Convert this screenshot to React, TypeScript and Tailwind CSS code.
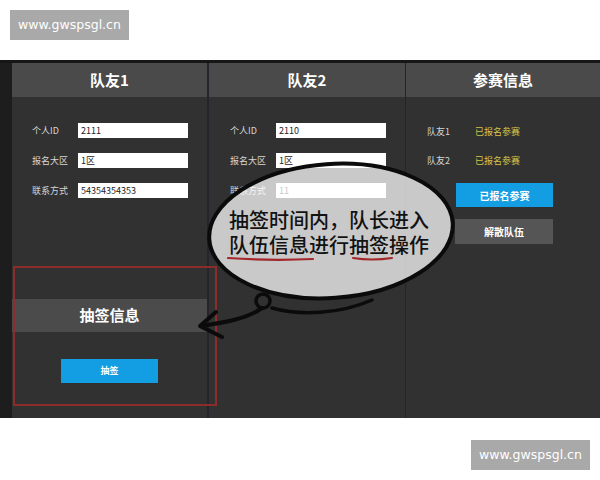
import React from "react";

function Field({ label, value }: { label: string; value: string }) {
  return (
    <div className="flex items-center h-[15px]">
      <div className="w-[46px] text-[9px] leading-none text-[#d6d6d6]">{label}</div>
      <div className="w-[110px] h-[15px] bg-white flex items-center pl-[3px] text-[9px] leading-none text-[#222]">{value}</div>
    </div>
  );
}

function Header({ title }: { title: string }) {
  return (
    <div className="h-[34px] bg-[#4a4a4a] flex items-center justify-center text-white text-[15px] font-bold">
      {title}
    </div>
  );
}

export default function App() {
  return (
    <div className="w-[600px] h-[480px] bg-white relative overflow-hidden font-['Noto_Sans_CJK_SC',sans-serif]">
      <div className="h-[60px] pt-[10px] pl-[10px]">
        <div className="w-[119px] h-[30px] bg-[#a9a9a9] text-white text-[12.5px] flex items-center justify-center font-['DejaVu_Sans',sans-serif]">
          www.gwspsgl.cn
        </div>
      </div>

      <div className="h-[358px] bg-[#313131] border-t-[3px] border-[#161616] flex">
        <div className="w-[12px] bg-[#1d1d1d]" />

        <div className="w-[195px] flex flex-col">
          <Header title="队友1" />
          <div className="pt-[26px] pl-[20px] flex flex-col gap-[15px]">
            <Field label="个人ID" value="2111" />
            <Field label="报名大区" value="1区" />
            <Field label="联系方式" value="54354354353" />
          </div>
          <div className="mt-[101px] h-[33px] bg-[#4b4b4b] flex items-center justify-center text-white text-[15px] font-bold">
            抽签信息
          </div>
          <div className="mt-[27px] flex justify-center">
            <div className="w-[97px] h-[24px] bg-[#139de2] text-white text-[9px] font-bold flex items-center justify-center">
              抽签
            </div>
          </div>
        </div>

        <div className="w-[2px] bg-[#24242a]" />

        <div className="w-[196px] flex flex-col">
          <Header title="队友2" />
          <div className="pt-[26px] pl-[21px] flex flex-col gap-[15px]">
            <Field label="个人ID" value="2110" />
            <Field label="报名大区" value="1区" />
            <Field label="联系方式" value="11" />
          </div>
        </div>

        <div className="w-[1px] bg-[#24242a]" />

        <div className="flex-1 flex flex-col">
          <Header title="参赛信息" />
          <div className="pt-[27px] pl-[21px] flex flex-col gap-[14px]">
            <div className="flex items-center h-[15px] text-[9px] leading-none">
              <div className="w-[48px] text-[#d6d6d6]">队友1</div>
              <div className="text-[#d4c646]">已报名参赛</div>
            </div>
            <div className="flex items-center h-[15px] text-[9px] leading-none">
              <div className="w-[48px] text-[#d6d6d6]">队友2</div>
              <div className="text-[#d4c646]">已报名参赛</div>
            </div>
          </div>
          <div className="mt-[15px] ml-[50px] w-[97px] h-[24px] bg-[#139de2] text-white text-[10px] font-bold flex items-center justify-center">
            已报名参赛
          </div>
          <div className="mt-[12px] ml-[49px] w-[98px] h-[25px] bg-[#555555] text-white text-[10px] font-bold flex items-center justify-center">
            解散队伍
          </div>
        </div>
      </div>

      <div className="flex justify-end pr-[10px] pt-[22px]">
        <div className="w-[119px] h-[30px] bg-[#a9a9a9] text-white text-[12.5px] flex items-center justify-center font-['DejaVu_Sans',sans-serif]">
          www.gwspsgl.cn
        </div>
      </div>

      <div className="absolute left-[13px] top-[266px] w-[204px] h-[140px] border-2 border-[#8e2b2b]" />

      <svg className="absolute left-0 top-0 pointer-events-none" width="600" height="480" viewBox="0 0 600 480">
        <ellipse cx="331" cy="231" rx="122" ry="67" transform="rotate(-4 331 231)" fill="rgba(255,255,255,0.74)" stroke="#0b0b0b" strokeWidth="4" />
        <path d="M 372 300 C 340 314, 300 316, 272 308" fill="none" stroke="#0b0b0b" strokeWidth="3.5" strokeLinecap="round" />
        <circle cx="263" cy="301" r="7" fill="none" stroke="#0b0b0b" strokeWidth="3.5" />
        <path d="M 262 308 C 248 318, 228 322, 201 326" fill="none" stroke="#0b0b0b" strokeWidth="4" strokeLinecap="round" />
        <path d="M 216 312 L 200 326 L 222 337" fill="none" stroke="#0b0b0b" strokeWidth="4" strokeLinecap="round" strokeLinejoin="round" />
        <path d="M 228 258 Q 270 261 313 259" fill="none" stroke="#a3272b" strokeWidth="2.2" strokeLinecap="round" />
        <path d="M 353 258 Q 372 261 392 258" fill="none" stroke="#a3272b" strokeWidth="2.2" strokeLinecap="round" />
      </svg>

      <div className="absolute left-[229px] top-[207px] flex flex-col text-[20px] leading-[25px] text-[#121212] font-medium whitespace-nowrap">
        <div className="h-[25px]">抽签时间内，队长进入</div>
        <div className="h-[25px]">队伍信息进行抽签操作</div>
      </div>
    </div>
  );
}
